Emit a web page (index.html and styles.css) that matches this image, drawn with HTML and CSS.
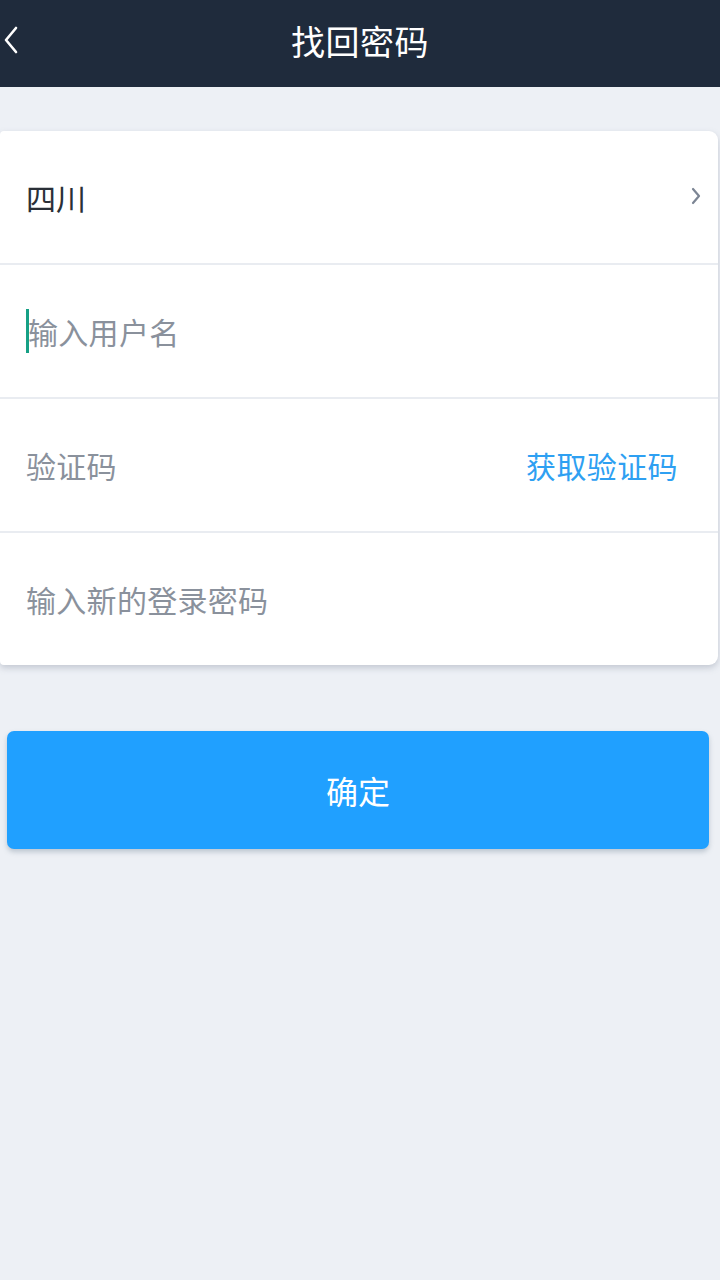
FILE: index.html
```html
<!DOCTYPE html>
<html lang="zh">
<head>
<meta charset="utf-8">
<title>找回密码</title>
<link rel="stylesheet" href="styles.css">
</head>
<body>
<header class="topbar">
  <span class="back">
    <svg width="16" height="28" viewBox="0 0 16 28"><path d="M13 2 L3 14 L13 26" fill="none" stroke="#fff" stroke-width="2.6" stroke-linecap="round" stroke-linejoin="round"/></svg>
  </span>
  <h1 class="title">找回密码</h1>
</header>
<main class="content">
  <section class="card">
    <div class="row">
      <span class="value">四川</span>
      <svg class="chev" width="12" height="18" viewBox="0 0 12 18"><path d="M3 2 L9 9 L3 16" fill="none" stroke="#7c8594" stroke-width="2.2" stroke-linecap="round" stroke-linejoin="round"/></svg>
    </div>
    <div class="row">
      <span class="caret"></span><span class="placeholder">输入用户名</span>
    </div>
    <div class="row">
      <span class="placeholder grow">验证码</span>
      <span class="link">获取验证码</span>
    </div>
    <div class="row last">
      <span class="placeholder">输入新的登录密码</span>
    </div>
  </section>
  <button class="submit">确定</button>
</main>
</body>
</html>
```
FILE: styles.css
```css
html, body {
  margin: 0;
  padding: 0;
}
body {
  width: 720px;
  height: 1280px;
  background: #edf0f5;
  font-family: "Noto Sans CJK SC", "Noto Sans", sans-serif;
  overflow: hidden;
}
.topbar {
  height: 87px;
  background: #1f2b3c;
  display: flex;
  align-items: center;
  justify-content: center;
  position: relative;
}
.back {
  position: absolute;
  left: 3px;
  top: 26px;
  display: flex;
}
.title {
  margin: 0 0 6px 0;
  font-size: 34px;
  font-weight: 400;
  color: #ffffff;
  letter-spacing: 0.5px;
}
.content {
  padding-top: 44px;
}
.card {
  width: 718px;
  background: #ffffff;
  border-radius: 4px 9px 9px 4px;
  box-shadow: 0 3px 6px rgba(120, 130, 150, 0.35);
}
.row {
  height: 134px;
  border-bottom: 2px solid #e9ecf1;
  display: flex;
  align-items: center;
  padding: 0 16px 0 26px;
  box-sizing: border-box;
}
.row.last {
  height: 132px;
  border-bottom: none;
}
.value {
  flex: 1;
  font-size: 30px;
  color: #2a2f37;
}
.chev {
  margin-top: -2px;
}
.placeholder {
  font-size: 30px;
  color: #8a919c;
  letter-spacing: 0.3px;
}
.grow {
  flex: 1;
}
.link {
  font-size: 30px;
  color: #2ea0f2;
  margin-right: 24px;
  letter-spacing: 0.4px;
}
.caret {
  width: 3px;
  height: 44px;
  background: #16a085;
  margin-right: -1px;
}
.submit {
  display: block;
  margin: 66px 0 0 7px;
  width: 702px;
  height: 118px;
  border: none;
  border-radius: 7px;
  background: #20a0ff;
  color: #ffffff;
  font-family: "Noto Sans CJK SC", "Noto Sans", sans-serif;
  font-size: 32px;
  padding: 0;
  box-shadow: 0 3px 5px rgba(100, 120, 140, 0.35);
}
```
